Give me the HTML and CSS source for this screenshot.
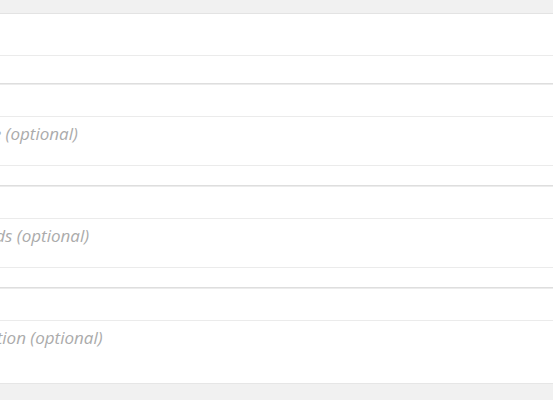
FILE: index.html
```html
<!DOCTYPE html>
<html>
<head>
<meta charset="utf-8">
<link rel="stylesheet" href="styles.css">
</head>
<body>
<form class="panel">
  <div class="group group-first">
    <textarea class="field area area-first" placeholder=""></textarea>
    <div class="spacer spacer-first"></div>
  </div>
  <div class="group">
    <input class="field line" type="text">
    <textarea class="field area ind-title" placeholder="Title (optional)"></textarea>
    <div class="spacer"></div>
  </div>
  <div class="group">
    <input class="field line" type="text">
    <textarea class="field area ind-keywords" placeholder="Keywords (optional)"></textarea>
    <div class="spacer"></div>
  </div>
  <div class="group group-last">
    <input class="field line" type="text">
    <textarea class="field area area-last ind-desc" placeholder="Description (optional)"></textarea>
  </div>
</form>
</body>
</html>
```

FILE: styles.css
```css
html, body {
  margin: 0;
  padding: 0;
  background: #f1f1f1;
  overflow: hidden;
}
body {
  font-family: "Open Sans", "Liberation Sans", sans-serif;
}
.panel {
  margin-top: 13px;
  background: #ffffff;
  border-top: 1px solid #e3e3e3;
  border-bottom: 1px solid #e6e6e6;
  display: flex;
  flex-direction: column;
  width: 600px;
}
.group {
  display: flex;
  flex-direction: column;
  border-bottom: 1px solid #dedede;
  box-shadow: 0 1px 0 #ececec;
  margin-bottom: 1px;
}
.group-last {
  border-bottom: none;
  box-shadow: none;
  margin-bottom: 0;
}
.field {
  display: block;
  box-sizing: border-box;
  width: 100%;
  margin: 0;
  border: none;
  outline: none;
  background: #ffffff;
  font-family: "Open Sans", "Liberation Sans", sans-serif;
  font-style: italic;
  font-size: 17px;
  line-height: 21px;
  color: #555;
  border-bottom: 1px solid #ebebeb;
  padding: 0;
  resize: none;
}
.field::placeholder {
  color: #ababab;
  opacity: 1;
}
.line {
  height: 32px;
}
.area {
  height: 49px;
  padding-top: 6px;
  overflow: hidden;
}
.area-first {
  height: 42px;
}
.area-last {
  height: 62px;
  border-bottom: none;
}
.spacer {
  height: 19px;
}
.spacer-first {
  height: 27px;
}
.ind-title { text-indent: -30px; }
.ind-keywords { text-indent: -59px; }
.ind-desc { text-indent: -59px; }
```
